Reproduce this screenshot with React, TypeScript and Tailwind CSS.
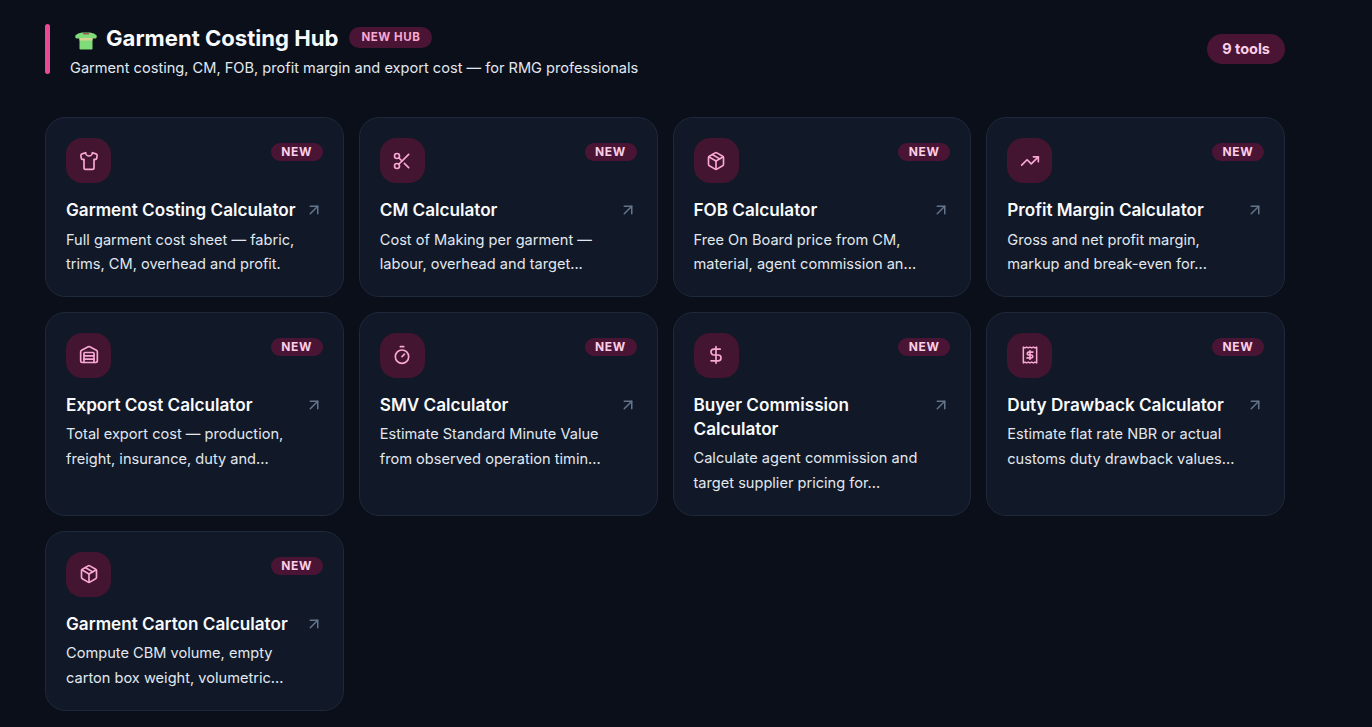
import { ArrowUpRight, Package, Scissors, Shirt, Timer, TrendingUp, DollarSign, Warehouse } from "lucide-react";
import type { ReactNode } from "react";

function ReceiptDollar({ className }: { className?: string }) {
  return (
    <svg className={className} viewBox="0 0 24 24" fill="none" stroke="currentColor" strokeWidth="1.8" strokeLinecap="round" strokeLinejoin="round">
      <path d="M4 2.5 l2 1 2-1 2 1 2-1 2 1 2-1 2 1 2-1 V21.5 l-2-1 -2 1 -2-1 -2 1 -2-1 -2 1 -2-1 -2 1 Z" />
      <path d="M15.5 8.5h-5a1.75 1.75 0 0 0 0 3.5h3a1.75 1.75 0 0 1 0 3.5h-5" strokeWidth="2" />
      <path d="M12 7v10" strokeWidth="2" />
    </svg>
  );
}

function Tee() {
  return (
    <svg width="22" height="18" viewBox="0 0 22 18" className="shrink-0">
      <path d="M7 0.5 Q2.5 1.2 0.5 3.2 Q0 4 0.5 6 Q2 6.8 4.5 6.5 L4.5 16.8 Q4.5 17.5 5.5 17.5 L16.5 17.5 Q17.5 17.5 17.5 16.8 L17.5 6.5 Q20 6.8 21.5 6 Q22 4 21.5 3.2 Q19.5 1.2 15 0.5 Z" fill="#7fdc78" />
      <path d="M7.5 1 L14.5 1 L13.5 2.6 L8.5 2.6 Z" fill="#a8505a" />
      <rect x="4.5" y="6" width="13" height="2.5" fill="#d9cf95" />
    </svg>
  );
}

type Tool = { icon: ReactNode; title: ReactNode; desc: ReactNode };

const ic = "w-[20px] h-[20px]";

const tools: Tool[] = [
  { icon: <Shirt className={ic} />, title: "Garment Costing Calculator", desc: <>Full garment cost sheet — fabric,<br />trims, CM, overhead and profit.</> },
  { icon: <Scissors className={ic} />, title: "CM Calculator", desc: <>Cost of Making per garment —<br />labour, overhead and target...</> },
  { icon: <Package className={ic} />, title: "FOB Calculator", desc: <>Free On Board price from CM,<br />material, agent commission an...</> },
  { icon: <TrendingUp className={ic} />, title: "Profit Margin Calculator", desc: <>Gross and net profit margin,<br />markup and break-even for...</> },
  { icon: <Warehouse className={ic} />, title: "Export Cost Calculator", desc: <>Total export cost — production,<br />freight, insurance, duty and...</> },
  { icon: <Timer className={ic} />, title: "SMV Calculator", desc: <>Estimate Standard Minute Value<br />from observed operation timin...</> },
  { icon: <DollarSign className={ic} />, title: <>Buyer Commission<br />Calculator</>, desc: <>Calculate agent commission and<br />target supplier pricing for...</> },
  { icon: <ReceiptDollar className={ic} />, title: "Duty Drawback Calculator", desc: <>Estimate flat rate NBR or actual<br />customs duty drawback values...</> },
  { icon: <Package className={ic} />, title: "Garment Carton Calculator", desc: <>Compute CBM volume, empty<br />carton box weight, volumetric...</> },
];

function Card({ tool }: { tool: Tool }) {
  return (
    <div className="rounded-[20px] border border-[#1e293b] bg-[#111827] pt-[20px] px-[20px] pb-[19.5px] min-h-[180px]">
      <div className="flex items-start justify-between">
        <div className="w-[45px] h-[45px] rounded-[16px] bg-[#431530] text-[#f9a8d4] flex items-center justify-center">
          {tool.icon}
        </div>
        <span className="mt-[5px] h-[18px] px-[10.5px] rounded-full bg-[#4a1534] text-[#fbcfe8] text-[12px] font-bold tracking-[0.7px] leading-[18px]">NEW</span>
      </div>
      <div className="mt-[15px] flex items-start justify-between">
        <h3 className="text-[17.15px] leading-[24px] font-semibold text-[#f8fafc]">{tool.title}</h3>
        <ArrowUpRight className="w-[18px] h-[18px] mt-[3px] text-[#64748b] shrink-0" strokeWidth={2} />
      </div>
      <p className="mt-[5.5px] text-[14.6px] leading-[24.5px] text-[#e2e8f0]">{tool.desc}</p>
    </div>
  );
}

export default function App() {
  return (
    <div className="min-h-[727px] bg-[#0a0f1a] font-['Inter',sans-serif] pl-[45px] pt-[24px] pb-[16px] overflow-hidden">
      <div className="w-[1240px]">
        <div className="flex items-start justify-between h-[52px]">
          <div className="flex items-start gap-[21px]">
            <div className="w-[5px] h-[50px] rounded-full bg-[#ec4899]" />
            <div className="-ml-[1px]">
              <div className="flex items-center">
                <span className="ml-[5px] mr-[9px] mt-[5px]"><Tee /></span>
                <h2 className="text-[22.1px] leading-[28px] font-bold text-[#f8fafc]">Garment Costing Hub</h2>
                <span className="ml-[11px] -mt-[2px] h-[21px] px-[12px] rounded-full bg-[#4a1534] text-[#f9a8d4] text-[11.5px] font-bold tracking-[0.55px] leading-[21px]">NEW HUB</span>
              </div>
              <p className="mt-[5px] text-[14.6px] leading-[22px] text-[#e2e8f0]">Garment costing, CM, FOB, profit margin and export cost — for RMG professionals</p>
            </div>
          </div>
          <span className="mt-[10px] h-[30px] px-[15px] rounded-full bg-[#4a1534] text-[#fbcfe8] text-[14.5px] font-bold leading-[30px]">9 tools</span>
        </div>
        <div className="mt-[41px] grid grid-cols-4 gap-x-[15px] gap-y-[14.8px]">
          {tools.map((t, i) => <Card key={i} tool={t} />)}
        </div>
      </div>
    </div>
  );
}
